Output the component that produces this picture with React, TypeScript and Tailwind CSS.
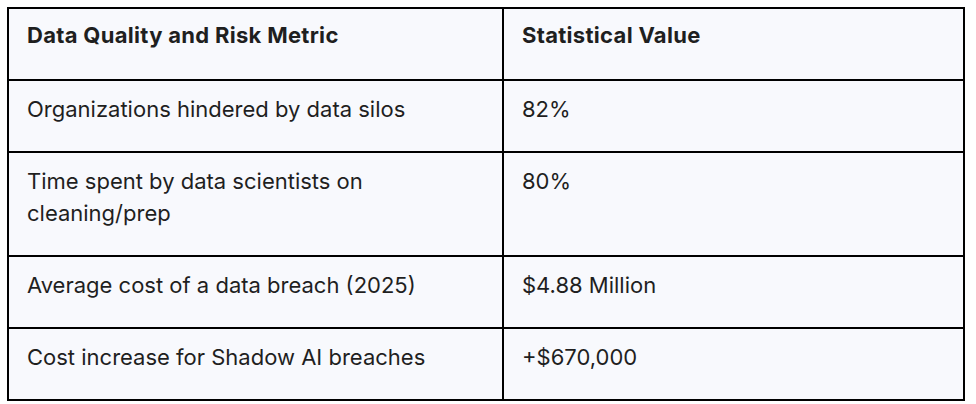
import React from "react";

const rows: [string, string][] = [
  ["Organizations hindered by data silos", "82%"],
  ["Time spent by data scientists on cleaning/prep", "80%"],
  ["Average cost of a data breach (2025)", "$4.88 Million"],
  ["Cost increase for Shadow AI breaches", "+$670,000"],
];

export default function App() {
  return (
    <div
      className="w-[976px] h-[404px] bg-white pt-[7px] pl-[7px]"
      style={{ fontFamily: "Inter, 'Noto Sans', Arial, sans-serif" }}
    >
      <table className="table-fixed border-collapse w-[958px] bg-[#f8f9fd] text-[#1f1f1f] text-[22px] leading-[32px]">
        <colgroup>
          <col className="w-[495px]" />
          <col className="w-[461px]" />
        </colgroup>
        <thead>
          <tr>
            <th className="border-2 border-black text-left align-top font-bold tracking-[0.3px] pl-[18px] pr-4 pt-[10px] pb-[28px]">
              Data Quality and Risk Metric
            </th>
            <th className="border-2 border-black text-left align-top font-bold tracking-[0.3px] pl-[18px] pr-4 pt-[10px] pb-[28px]">
              Statistical Value
            </th>
          </tr>
        </thead>
        <tbody>
          {rows.map(([a, b]) => (
            <tr key={a}>
              <td className="border-2 border-black align-top pl-[18px] pr-[56px] pt-3 pb-[26px]">{a}</td>
              <td className="border-2 border-black align-top pl-[18px] pr-4 pt-3 pb-[26px]">{b}</td>
            </tr>
          ))}
        </tbody>
      </table>
    </div>
  );
}
